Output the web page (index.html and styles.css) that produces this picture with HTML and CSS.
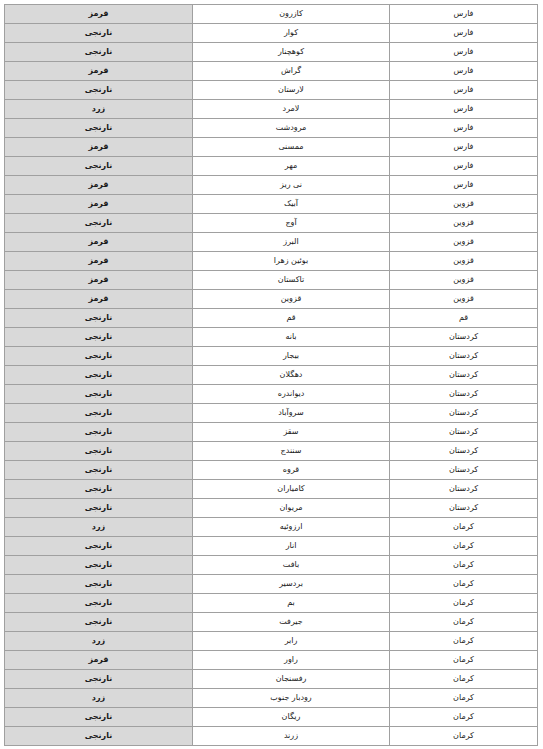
FILE: index.html
```html
<!DOCTYPE html>
<html lang="fa" dir="rtl">
<head>
<meta charset="utf-8">
<title>جدول</title>
<link rel="stylesheet" href="styles.css">
</head>
<body>
<table class="grid">
<colgroup><col class="c-prov"><col class="c-city"><col class="c-color"></colgroup>
<tbody>
<tr><td>فارس</td><td>کازرون</td><td class="status">قرمز</td></tr>
<tr><td>فارس</td><td>کوار</td><td class="status">نارنجی</td></tr>
<tr><td>فارس</td><td>کوهچنار</td><td class="status">نارنجی</td></tr>
<tr><td>فارس</td><td>گراش</td><td class="status">قرمز</td></tr>
<tr><td>فارس</td><td>لارستان</td><td class="status">نارنجی</td></tr>
<tr><td>فارس</td><td>لامرد</td><td class="status">زرد</td></tr>
<tr><td>فارس</td><td>مرودشت</td><td class="status">نارنجی</td></tr>
<tr><td>فارس</td><td>ممسنی</td><td class="status">قرمز</td></tr>
<tr><td>فارس</td><td>مهر</td><td class="status">نارنجی</td></tr>
<tr><td>فارس</td><td>نی ریز</td><td class="status">قرمز</td></tr>
<tr><td>قزوین</td><td>آبیک</td><td class="status">قرمز</td></tr>
<tr><td>قزوین</td><td>آوج</td><td class="status">نارنجی</td></tr>
<tr><td>قزوین</td><td>البرز</td><td class="status">قرمز</td></tr>
<tr><td>قزوین</td><td>بوئین زهرا</td><td class="status">قرمز</td></tr>
<tr><td>قزوین</td><td>تاکستان</td><td class="status">قرمز</td></tr>
<tr><td>قزوین</td><td>قزوین</td><td class="status">قرمز</td></tr>
<tr><td>قم</td><td>قم</td><td class="status">نارنجی</td></tr>
<tr><td>کردستان</td><td>بانه</td><td class="status">نارنجی</td></tr>
<tr><td>کردستان</td><td>بیجار</td><td class="status">نارنجی</td></tr>
<tr><td>کردستان</td><td>دهگلان</td><td class="status">نارنجی</td></tr>
<tr><td>کردستان</td><td>دیواندره</td><td class="status">نارنجی</td></tr>
<tr><td>کردستان</td><td>سروآباد</td><td class="status">نارنجی</td></tr>
<tr><td>کردستان</td><td>سقز</td><td class="status">نارنجی</td></tr>
<tr><td>کردستان</td><td>سنندج</td><td class="status">نارنجی</td></tr>
<tr><td>کردستان</td><td>قروه</td><td class="status">نارنجی</td></tr>
<tr><td>کردستان</td><td>کامیاران</td><td class="status">نارنجی</td></tr>
<tr><td>کردستان</td><td>مریوان</td><td class="status">نارنجی</td></tr>
<tr><td>کرمان</td><td>ارزوئیه</td><td class="status">زرد</td></tr>
<tr><td>کرمان</td><td>انار</td><td class="status">نارنجی</td></tr>
<tr><td>کرمان</td><td>بافت</td><td class="status">نارنجی</td></tr>
<tr><td>کرمان</td><td>بردسیر</td><td class="status">نارنجی</td></tr>
<tr><td>کرمان</td><td>بم</td><td class="status">نارنجی</td></tr>
<tr><td>کرمان</td><td>جیرفت</td><td class="status">نارنجی</td></tr>
<tr><td>کرمان</td><td>رابر</td><td class="status">زرد</td></tr>
<tr><td>کرمان</td><td>راور</td><td class="status">قرمز</td></tr>
<tr><td>کرمان</td><td>رفسنجان</td><td class="status">نارنجی</td></tr>
<tr><td>کرمان</td><td>رودبار جنوب</td><td class="status">زرد</td></tr>
<tr><td>کرمان</td><td>ریگان</td><td class="status">نارنجی</td></tr>
<tr><td>کرمان</td><td>زرند</td><td class="status">نارنجی</td></tr>
</tbody>
</table>
</body>
</html>
```
FILE: styles.css
```css
html, body {
  margin: 0;
  padding: 0;
  background: #ffffff;
}
body {
  padding: 4px 0 0 0;
  font-family: "DejaVu Sans", "Noto Sans", sans-serif;
  font-size: 8px;
  color: #1a1a1a;
}
.grid {
  border-collapse: collapse;
  table-layout: fixed;
  width: 533px;
  margin-left: 4px;
  margin-right: auto;
}
.c-prov { width: 148px; }
.c-city { width: 197px; }
.c-color { width: 188px; }
.grid td {
  height: 18px;
  padding: 0;
  border: 1px solid #a0a0a0;
  text-align: center;
  vertical-align: middle;
  line-height: 12px;
  white-space: nowrap;
}
.grid td.status {
  background: #d9d9d9;
  font-weight: bold;
  border-right: 1px solid #333333;
}
```
